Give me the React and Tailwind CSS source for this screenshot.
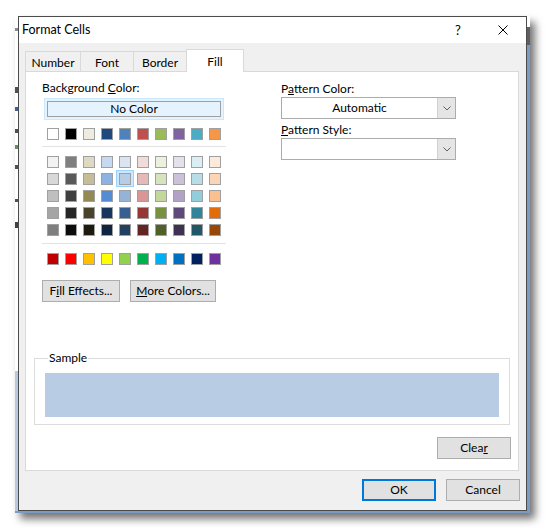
import React from "react";

const THEME_TOP = ["#FFFFFF", "#000000", "#EEECE1", "#1F497D", "#4F81BD", "#C0504D", "#9BBB59", "#8064A2", "#4BACC6", "#F79646"];

const THEME_TINTS = [
    ["#F2F2F2", "#7F7F7F", "#DDD9C3", "#C6D9F0", "#DBE5F1", "#F2DCDB", "#EBF1DD", "#E5E0EC", "#DBEEF3", "#FDEADA"],
    ["#D8D8D8", "#595959", "#C4BD97", "#8DB3E2", "#B8CCE4", "#E5B9B7", "#D7E3BC", "#CCC1D9", "#B7DDE8", "#FBD5B5"],
    ["#BFBFBF", "#3F3F3F", "#938953", "#548DD4", "#95B3D7", "#D99694", "#C3D69B", "#B2A2C7", "#92CDDC", "#FAC08F"],
    ["#A5A5A5", "#262626", "#494429", "#17365D", "#366092", "#953734", "#76923C", "#5F497A", "#31859B", "#E36C09"],
    ["#7F7F7F", "#0C0C0C", "#1D1B10", "#0F243E", "#244061", "#632423", "#4F6128", "#3F3151", "#205867", "#974806"],
];

const STANDARD = ["#C00000", "#FF0000", "#FFC000", "#FFFF00", "#92D050", "#00B050", "#00B0F0", "#0070C0", "#002060", "#7030A0"];

// selected swatch: tint row 1, column 4
const SELECTED = { row: 1, col: 4 };

function Swatch({ color, selected }) {
    return (
        <div className="relative h-[12px] w-[12px]">
            {selected && (
                <div className="absolute -left-[3px] -top-[3px] h-[17px] w-[18px] border border-[#99d1ff] bg-[#cce8ff]" />
            )}
            <div
                className="relative h-[12px] w-[12px] border border-[#a0a0a0]"
                style={{ backgroundColor: color }}
            />
        </div>
    );
}

function SwatchRow({ colors, selectedCol = -1 }) {
    return (
        <div className="ml-[5px] flex gap-[6px]">
            {colors.map((c, i) => (
                <Swatch key={i} color={c} selected={i === selectedCol} />
            ))}
        </div>
    );
}

function Button({ children, className = "" }) {
    return (
        <div
            className={[
                "flex h-[22px] items-center justify-center border border-[#adadad] bg-[#e1e1e1]",
                className,
            ].join(" ")}
        >
            {children}
        </div>
    );
}

function Chevron() {
    return (
        <svg width="8" height="5" viewBox="0 0 8 5" className="block">
            <path d="M0.5 0.5 L4 4 L7.5 0.5" fill="none" stroke="#606060" strokeWidth="1" />
        </svg>
    );
}

function Dropdown({ value }) {
    return (
        <div className="flex h-[22px] w-[175px] border border-[#acacac] bg-white">
            <div className="flex flex-1 items-center justify-center">{value}</div>
            <div className="flex w-[18px] items-center justify-center border-l border-[#d0d0d0] bg-[#e5e5e5]">
                <Chevron />
            </div>
        </div>
    );
}

function Tab({ label, active }) {
    if (active) {
        return (
            <div className="relative z-10 -mb-px -ml-px flex h-[23px] w-[58px] items-start justify-center border border-b-0 border-[#d9d9d9] bg-white pt-[4px]">
                {label}
            </div>
        );
    }
    return (
        <div className="-ml-px flex h-[20px] items-center justify-center border border-b-0 border-[#d9d9d9] bg-[#f0f0f0] pt-[2px] first:ml-0">
            {label}
        </div>
    );
}

export default function App() {
    return (
        <div className="min-h-screen bg-white font-['Lato',sans-serif] text-[12px] leading-[16px] text-black">
            <div className="pl-[15px] pt-[16px]">
                {/* spreadsheet window peeking out behind the dialog */}
                <div className="flex w-[515px] flex-col shadow-[5px_6px_8px_rgba(0,0,0,0.55)]">
                    <div className="flex">
                        {/* left strip */}
                        <div className="flex w-[3px] flex-col bg-white">
                            <div className="mt-[12px] h-[3px] bg-[#8a8a8a]" />
                            <div className="mt-[56px] h-[6px] bg-[#505050]" />
                            <div className="mt-[14px] h-[4px] bg-[#3c5f96]" />
                            <div className="mt-[18px] h-[4px] bg-[#505050]" />
                            <div className="mt-[12px] h-[4px] bg-[#6a8a60]" />
                            <div className="mt-[16px] h-[4px] bg-[#505050]" />
                            <div className="mt-[30px] h-[3px] bg-[#505050]" />
                            <div className="mt-[20px] h-[6px] bg-[#404040]" />
                            <div className="flex-1" />
                            <div className="h-[140px] bg-[#b7c9e0]" />
                        </div>

                        {/* dialog */}
                        <div className="flex h-[495px] w-[509px] flex-col border border-[#4b4b4b] bg-[#f0f0f0]">
                            {/* title bar */}
                            <div className="flex h-[26px] items-center bg-white pl-[3px] text-[12.5px]">
                                <span className="flex-1">Format Cells</span>
                                <div className="flex w-[44px] items-center justify-center text-[13px]">?</div>
                                <div className="flex w-[46px] items-center justify-center">
                                    <svg width="10" height="10" viewBox="0 0 10 10" className="block">
                                        <path d="M0.5 0.5 L9.5 9.5 M9.5 0.5 L0.5 9.5" stroke="#000" strokeWidth="1" />
                                    </svg>
                                </div>
                            </div>

                            {/* tabs */}
                            <div className="ml-[6px] mt-[6px] flex items-end">
                                <div className="flex w-[56px] flex-col"><Tab label="Number" /></div>
                                <div className="-ml-px flex w-[54px] flex-col"><Tab label="Font" /></div>
                                <div className="-ml-px flex w-[54px] flex-col"><Tab label="Border" /></div>
                                <Tab label="Fill" active />
                            </div>

                            {/* tab panel */}
                            <div className="ml-[6px] h-[400px] w-[494px] border border-[#d9d9d9] bg-white">
                                <div className="flex">
                                    {/* background colour */}
                                    <div className="ml-[16px] w-[184px] pt-[7px]">
                                        <div className="h-[16px] pt-px">
                                            Background <u>C</u>olor:
                                        </div>
                                        <div className="ml-[2px] mt-[3px] h-[22px] w-[180px] border border-[#cce8ff] bg-[#e5f3ff] px-[2px] py-[2px]">
                                            <div className="flex h-[16px] items-center justify-center border border-[#a0a0a0]">
                                                No Color
                                            </div>
                                        </div>
                                        <div className="mt-[8px]">
                                            <SwatchRow colors={THEME_TOP} />
                                        </div>
                                        <div className="mt-[6px] h-px bg-[#e3e3e3]" />
                                        <div className="mt-[9px] flex flex-col gap-[5px]">
                                            {THEME_TINTS.map((row, r) => (
                                                <SwatchRow
                                                    key={r}
                                                    colors={row}
                                                    selectedCol={r === SELECTED.row ? SELECTED.col : -1}
                                                />
                                            ))}
                                        </div>
                                        <div className="mt-[7px] h-px bg-[#e3e3e3]" />
                                        <div className="mt-[9px]">
                                            <SwatchRow colors={STANDARD} />
                                        </div>
                                        <div className="mt-[15px] flex gap-[10px]">
                                            <Button className="w-[78px]">
                                                <span>F<u>i</u>ll Effects...</span>
                                            </Button>
                                            <Button className="w-[86px]">
                                                <span><u>M</u>ore Colors...</span>
                                            </Button>
                                        </div>
                                    </div>

                                    {/* pattern */}
                                    <div className="ml-[55px] w-[175px] pt-[8px]">
                                        <div className="h-[16px] pt-px">
                                            P<u>a</u>ttern Color:
                                        </div>
                                        <div className="mt-px">
                                            <Dropdown value="Automatic" />
                                        </div>
                                        <div className="mt-[2px] h-[16px] pt-px">
                                            <u>P</u>attern Style:
                                        </div>
                                        <div className="mt-px">
                                            <Dropdown value="" />
                                        </div>
                                    </div>
                                </div>

                                {/* sample */}
                                <fieldset className="ml-[8px] mt-[48px] w-[476px] border border-[#dcdcdc] px-[10px] pb-[7px]">
                                    <legend className="ml-[3px] px-px leading-[16px]">Sample</legend>
                                    <div className="mt-[7px] h-[44px] bg-[#b8cce4]" />
                                </fieldset>

                                <div className="mr-[7px] mt-[12px] flex justify-end">
                                    <Button className="w-[74px]">
                                        <span>Clea<u>r</u></span>
                                    </Button>
                                </div>
                            </div>

                            {/* dialog buttons */}
                            <div className="mr-[6px] mt-[8px] flex justify-end gap-[10px]">
                                <div className="flex h-[22px] w-[74px] items-center justify-center border-2 border-[#0078d7] bg-[#e1e1e1]">
                                    OK
                                </div>
                                <Button className="w-[74px]">Cancel</Button>
                            </div>
                        </div>

                        {/* right strip */}
                        <div className="flex w-[3px] flex-col">
                            <div className="h-[11px] bg-white" />
                            <div className="h-[18px] bg-[#5f5f5f]" />
                            <div className="flex-1 bg-[#7b9bc4]" />
                        </div>
                    </div>
                    {/* bottom strip */}
                    <div className="h-[2px] bg-[#7b9bc4]" />
                </div>
            </div>
        </div>
    );
}
